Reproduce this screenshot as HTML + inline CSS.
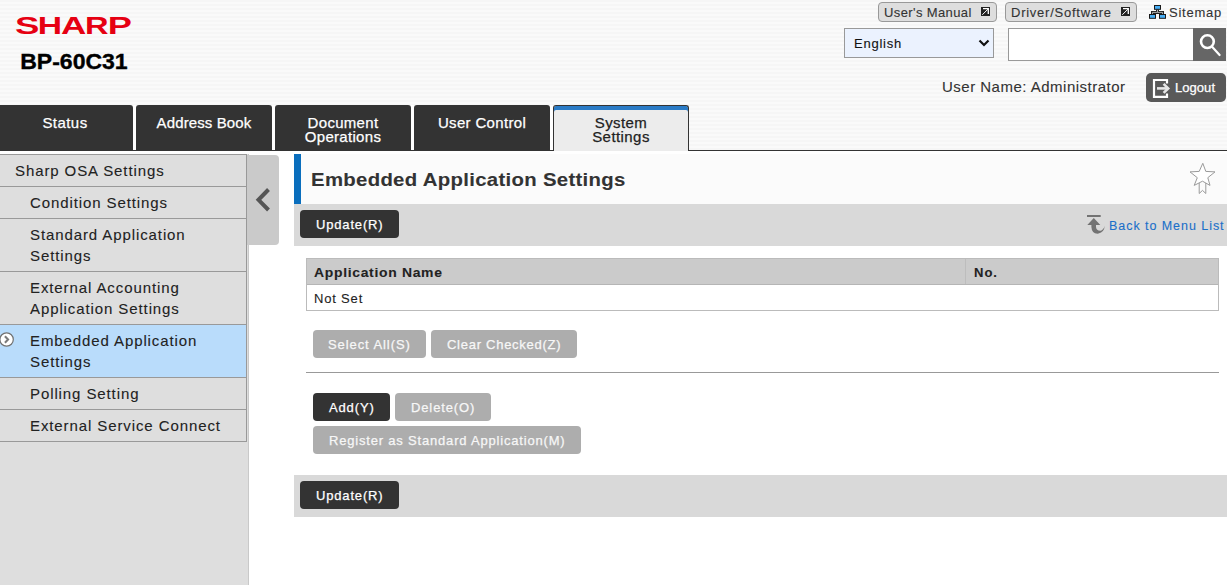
<!DOCTYPE html>
<html><head><meta charset="utf-8">
<style>
*{margin:0;padding:0;box-sizing:border-box;}
html,body{width:1227px;height:585px;overflow:hidden;background:#fff;font-family:"Liberation Sans",sans-serif;color:#222;}
.abs{position:absolute;}
body div{-webkit-text-stroke:0.1px currentColor;}
.btn,.tab{-webkit-text-stroke:0.25px currentColor !important;}
#hdr{position:absolute;left:0;top:0;width:1227px;height:150px;background:repeating-linear-gradient(#f6f6f6 0 2px,#fafafa 2px 4px);}
.t15{font-size:15px;letter-spacing:0.9px;white-space:nowrap;}
.tab{position:absolute;top:105px;height:45px;background:#333;color:#fff;border-radius:3px 3px 0 0;text-align:center;font-size:15px;letter-spacing:0.9px;line-height:14px;}
.tab span{display:block;}
.tab.one{padding-top:12px;}
.tab.two{padding-top:12px;}
.tab.act{height:46px;background:#ececec;color:#222;border:1px solid #333;border-bottom:none;box-shadow:inset 0 4px 0 #2a7bc6;}
#side{position:absolute;left:0;top:154px;width:249px;height:431px;background:#dedede;border-right:1px solid #c9c9c9;}
.it{position:absolute;left:0;width:247px;border-bottom:1px solid #999;border-right:1px solid #999;font-size:15px;letter-spacing:0.9px;line-height:21px;}
.btn{position:absolute;height:28px;border-radius:4px;color:#fff;font-size:13px;letter-spacing:0.83px;text-align:left;line-height:30px;white-space:nowrap;padding-left:16px;}
.dk{background:#333;}
.gr{background:#adadad;color:#f7f7f7;}
.hb{border:1px solid #999;border-radius:4px;background:#dedede;font-size:13px;letter-spacing:0.75px;color:#333;white-space:nowrap;}
.ext{position:absolute;right:6px;top:4px;width:9px;height:9px;background:#222;}
.ext:after{content:"";position:absolute;left:2px;top:2px;width:5px;height:5px;background:linear-gradient(45deg,transparent 40%,#fff 40%,#fff 60%,transparent 60%);}
</style></head>
<body>
<div id="hdr"></div>
<!-- logo -->
<svg class="abs" style="left:0;top:0" width="160" height="80">
  <g><text transform="translate(15.05,33.8) scale(1.555,1)" font-family="Liberation Sans" font-weight="bold" font-size="23.5" fill="#e60012">S</text><text transform="translate(37.75,33.8) scale(1.433,1)" font-family="Liberation Sans" font-weight="bold" font-size="23.5" fill="#e60012">H</text><text transform="translate(61.03,33.8) scale(1.491,1)" font-family="Liberation Sans" font-weight="bold" font-size="23.5" fill="#e60012">A</text><text transform="translate(85.12,33.8) scale(1.388,1)" font-family="Liberation Sans" font-weight="bold" font-size="23.5" fill="#e60012">R</text><text transform="translate(107.68,33.8) scale(1.541,1)" font-family="Liberation Sans" font-weight="bold" font-size="23.5" fill="#e60012">P</text></g>
  <text x="20.2" y="68.9" font-family="Liberation Sans" font-weight="bold" font-size="21.8" fill="#000" stroke="#000" stroke-width="0.35" textLength="107.5" lengthAdjust="spacingAndGlyphs">BP-60C31</text>
</svg>


<!-- header right -->
<div class="abs hb" style="left:878px;top:2px;width:119px;height:20px;"></div>
<div class="abs" style="left:884px;top:5px;font-size:13px;letter-spacing:0.39px;color:#333;white-space:nowrap;">User's Manual</div>
<div class="abs hb" style="left:1005px;top:2px;width:132px;height:20px;"></div>
<div class="abs" style="left:1011px;top:5px;font-size:13px;letter-spacing:0.75px;color:#333;white-space:nowrap;">Driver/Software</div>
<svg class="abs" style="left:0;top:0" width="1227" height="30" viewBox="0 0 1227 30">
 <rect x="981" y="7" width="9" height="9" fill="#222"/><path d="M983 8.7H988.3V14" stroke="#fff" stroke-width="1.3" fill="none"/><path d="M982.3 14.8L988 9.1" stroke="#fff" stroke-width="1"/>
 <rect x="1121" y="7" width="9" height="9" fill="#222"/><path d="M1123 8.7H1128.3V14" stroke="#fff" stroke-width="1.3" fill="none"/><path d="M1122.3 14.8L1128 9.1" stroke="#fff" stroke-width="1"/>
</svg>
<svg class="abs" style="left:1145px;top:2px" width="25" height="20" viewBox="1145 2 25 20">
  <path d="M1157.5 9.5V12.4H1152.5V14.5M1157.5 12.4H1162.5V14.5" stroke="#222" stroke-width="3" fill="none"/>
  <path d="M1157.5 9.5V12.4H1152.5V14.5M1157.5 12.4H1162.5V14.5" stroke="#aaa" stroke-width="1" fill="none"/>
  <rect x="1154.5" y="5.5" width="6" height="3.8" fill="#47aef5" stroke="#1a1a1a" stroke-width="1"/>
  <rect x="1149.5" y="14.5" width="6" height="3.8" fill="#47aef5" stroke="#1a1a1a" stroke-width="1"/>
  <rect x="1159.5" y="14.5" width="6" height="3.8" fill="#47aef5" stroke="#1a1a1a" stroke-width="1"/>
</svg>
<div class="abs" style="left:1169px;top:5px;font-size:13px;letter-spacing:0.75px;color:#333;white-space:nowrap;">Sitemap</div>
<div class="abs" style="left:844px;top:28px;width:150px;height:30px;border:1px solid #999;background:#ebf2fe;"></div>
<div class="abs" style="left:854px;top:36px;font-size:13px;letter-spacing:0.75px;color:#111;white-space:nowrap;">English</div>
<svg class="abs" style="left:978px;top:38px" width="12" height="10"><path d="M1.5 2.5L6 7L10.5 2.5" stroke="#111" stroke-width="2.2" fill="none"/></svg>
<div class="abs" style="left:1008px;top:28px;width:186px;height:33px;border:1px solid #999;border-right:none;background:#fff;"></div>
<div class="abs" style="left:1193px;top:28px;width:33px;height:33px;background:#666;"></div>
<svg class="abs" style="left:1193px;top:28px" width="33" height="33"><circle cx="14.4" cy="13.6" r="6.4" stroke="#fff" stroke-width="2.6" fill="none"/><path d="M19.3 19L26.6 27" stroke="#fff" stroke-width="2.2" stroke-linecap="round"/></svg>
<div class="abs" style="left:942px;top:78px;font-size:15px;letter-spacing:0.49px;color:#333;white-space:nowrap;">User Name: Administrator</div>
<div class="abs" style="left:1146px;top:73px;width:80px;height:29px;background:#595959;border-radius:5px;"></div>
<svg class="abs" style="left:1140px;top:70px" width="40" height="35" viewBox="1140 70 40 35">
  <path d="M1167 83.5V80H1154V96.8H1167V93.5" stroke="#fff" stroke-width="2.2" fill="none"/>
  <path d="M1157 88.4H1168" stroke="#e6e6e6" stroke-width="2.6"/><path d="M1163.6 83.9L1168.2 88.4L1163.6 92.9" stroke="#e6e6e6" stroke-width="2.6" fill="none"/>
</svg>
<div class="abs" style="left:1175px;top:80px;font-size:13px;letter-spacing:0.05px;color:#fff;white-space:nowrap;-webkit-text-stroke:0.25px #fff;">Logout</div>

<!-- tabs -->
<div class="abs" style="left:0;top:150px;width:1227px;height:1px;background:#333;"></div>
<div class="abs" style="left:133px;top:105px;width:3px;height:45px;background:#fff;"></div><div class="abs" style="left:272px;top:105px;width:3px;height:45px;background:#fff;"></div><div class="abs" style="left:411px;top:105px;width:3px;height:45px;background:#fff;"></div><div class="abs" style="left:550px;top:105px;width:3px;height:45px;background:#fff;"></div>

<div class="tab one" style="left:-3px;width:136px;letter-spacing:0.44px;padding-top:11px;"><span>Status</span></div>
<div class="tab one" style="left:136px;width:136px;letter-spacing:0.12px;padding-top:11px;"><span>Address Book</span></div>
<div class="tab two" style="left:275px;width:136px;padding-top:11px;letter-spacing:0.3px;"><span>Document</span><span>Operations</span></div>
<div class="tab one" style="left:414px;width:136px;letter-spacing:0.33px;padding-top:11px;"><span>User Control</span></div>
<div class="tab act" style="left:553px;width:136px;padding-top:10px;letter-spacing:0.43px;"><span>System</span><span>Settings</span></div>

<!-- sidebar -->
<div id="side"></div>
<div class="it" style="top:154px;height:33px;border-top:1px solid #999;padding:5px 0 0 15px;">Sharp OSA Settings</div>
<div class="it" style="top:187px;height:32px;padding:5px 0 0 30px;">Condition Settings</div>
<div class="it" style="top:219px;height:53px;padding:5px 0 0 30px;">Standard Application<br>Settings</div>
<div class="it" style="top:272px;height:53px;padding:5px 0 0 30px;">External Accounting<br>Application Settings</div>
<div class="it" style="top:325px;height:53px;padding:5px 0 0 30px;background:#b9dcfb;">Embedded Application<br>Settings</div>
<div class="it" style="top:378px;height:32px;padding:5px 0 0 30px;">Polling Setting</div>
<div class="it" style="top:410px;height:32px;padding:5px 0 0 30px;">External Service Connect</div>

<!-- collapse -->
<div class="abs" style="left:247px;top:155px;width:32px;height:90px;background:#cacaca;border-radius:0 4px 4px 0;"></div>

<!-- title -->
<div class="abs" style="left:294px;top:154px;width:933px;height:50px;background:#fbfbfb;"></div>
<div class="abs" style="left:294px;top:154px;width:7px;height:50px;background:#0a6ebd;"></div>
<div class="abs" style="left:311px;top:169px;font-size:19px;font-weight:bold;letter-spacing:0.3px;color:#333;white-space:nowrap;transform:scaleX(1.07);transform-origin:0 0;">Embedded Application Settings</div>

<!-- top bar -->
<div class="abs" style="left:294px;top:204px;width:933px;height:42px;background:#d9d9d9;"></div>
<div class="btn dk" style="left:300px;top:210px;width:99px;">Update(R)</div>
<div class="abs" style="left:1109px;top:219px;font-size:12.5px;letter-spacing:0.95px;color:#1a6fc9;white-space:nowrap;">Back to Menu List</div>

<!-- table -->
<div class="abs" style="left:306px;top:258px;width:913px;height:53px;border:1px solid #bbb;background:#fff;"></div>
<div class="abs" style="left:307px;top:259px;width:911px;height:26px;background:#cbcbcb;border-bottom:1px solid #b5b5b5;"></div>
<div class="abs" style="left:965px;top:259px;width:1px;height:25px;background:#bdbdbd;"></div>
<div class="abs" style="left:314px;top:265px;font-size:13px;font-weight:bold;letter-spacing:0.65px;white-space:nowrap;transform:scaleX(1.07);transform-origin:0 0;">Application Name</div>
<div class="abs" style="left:974px;top:265px;font-size:13px;font-weight:bold;letter-spacing:1.0px;white-space:nowrap;">No.</div>
<div class="abs" style="left:314px;top:291px;font-size:13px;letter-spacing:0.82px;white-space:nowrap;">Not Set</div>

<div class="btn gr" style="left:313px;top:330px;width:113px;letter-spacing:0.92px;padding-left:15px;">Select All(S)</div>
<div class="btn gr" style="left:431px;top:330px;width:146px;letter-spacing:0.73px;">Clear Checked(Z)</div>
<div class="abs" style="left:306px;top:372px;width:913px;height:1px;background:#999;"></div>
<div class="btn dk" style="left:313px;top:393px;width:77px;letter-spacing:0.86px;">Add(Y)</div>
<div class="btn gr" style="left:395px;top:393px;width:96px;letter-spacing:0.875px;">Delete(O)</div>
<div class="btn gr" style="left:313px;top:426px;width:268px;letter-spacing:0.81px;">Register as Standard Application(M)</div>

<!-- bottom bar -->
<div class="abs" style="left:294px;top:475px;width:933px;height:42px;background:#d9d9d9;"></div>
<div class="btn dk" style="left:300px;top:481px;width:99px;">Update(R)</div>

<svg class="abs" style="left:248px;top:155px" width="31" height="89"><path d="M268.5 189.5L258.5 199.8L268.5 210" transform="translate(-248,-155)" stroke="#555" stroke-width="4" fill="none" stroke-linejoin="miter"/></svg>
<svg class="abs" style="left:1185px;top:158px" width="36" height="40" viewBox="1185 158 36 40">
 <path d="M1202.8 163.3L1205.8 171.4L1215 171.9L1207.8 177.7L1210 185.4L1202.5 181.2L1194.2 185.4L1197.3 177.7L1190 171.9L1199.2 171.4Z" stroke="#9a9a9a" stroke-width="1" fill="#fff" stroke-linejoin="round"/>
 <path d="M1199.2 183V193.5L1202.5 190.4L1205.8 193.5V183" stroke="#9a9a9a" stroke-width="1" fill="none"/>
</svg>
<svg class="abs" style="left:1085px;top:212px" width="20" height="24" viewBox="1085 212 20 24">
 <rect x="1087" y="215" width="13.7" height="2" fill="#737373"/><path d="M1093.8 217.9L1100.3 225.1H1096V227Q1096.5 231 1100.5 230.8Q1103.5 230 1104.8 225.8Q1104.2 232.2 1098.5 233.6Q1091.8 234.2 1091.4 227V225.1H1087.3Z" fill="#737373"/>
</svg>
<svg class="abs" style="left:0;top:332px" width="16" height="16" viewBox="0 332 16 16"><circle cx="6.6" cy="339.5" r="6.7" fill="#fff" stroke="#707070" stroke-width="1.2"/><path d="M4.9 336.2L8.1 339.5L4.9 342.8" stroke="#7a7a7a" stroke-width="2" fill="none"/></svg>
</body></html>
